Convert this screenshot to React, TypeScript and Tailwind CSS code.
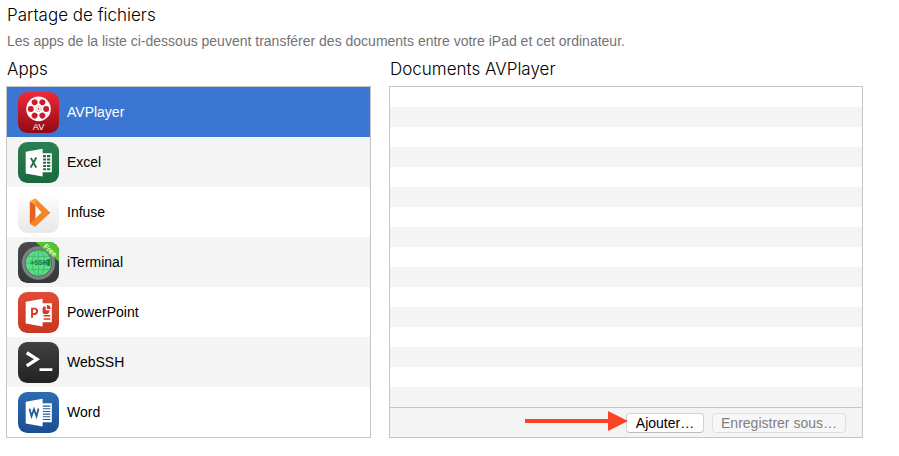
import React, { useState } from 'react';
import clsx from 'clsx';

interface AppItem {
    name: string;
    icon: React.ReactNode;
}

interface TileProps {
    id: string;
    from: string;
    to: string;
    children: React.ReactNode;
}

function Tile({ id, from, to, children }: TileProps) {
    return (
        <svg viewBox="0 0 40 40" className="size-[41px] shrink-0" aria-hidden="true">
            <defs>
                <linearGradient id={id} x1="0" y1="0" x2="0" y2="1">
                    <stop offset="0" stopColor={from} />
                    <stop offset="1" stopColor={to} />
                </linearGradient>
                <clipPath id={`${id}-clip`}>
                    <rect width="40" height="40" rx="9" />
                </clipPath>
            </defs>
            <g clipPath={`url(#${id}-clip)`}>
                <rect width="40" height="40" fill={`url(#${id})`} />
                {children}
            </g>
        </svg>
    );
}

function AVPlayerIcon() {
    return (
        <Tile id="avplayer" from="#f0283a" to="#8f0a14">
            <circle cx="20" cy="16.5" r="12" fill="#fff" />
            {[0, 60, 120, 180, 240, 300].map((angle) => (
                <circle key={angle} cx="20" cy="9" r="2.9" fill="#cb1b2a" transform={`rotate(${angle + 30} 20 16.5)`} />
            ))}
            <circle cx="20" cy="16.5" r="2.6" fill="none" stroke="#cb1b2a" strokeWidth=".6" strokeDasharray="1.2 1" />
            <circle cx="20" cy="16.5" r=".8" fill="#cb1b2a" />
            <text x="20" y="37.5" textAnchor="middle" fontSize="9" fill="#fff" fontFamily="Liberation Sans, sans-serif">AV</text>
        </Tile>
    );
}

function ExcelIcon() {
    return (
        <Tile id="excel" from="#2b8053" to="#176a3c">
            <rect x="22" y="11" width="11" height="18.5" fill="#fff" />
            <path d="M24.5 12.8h2.8v2h-2.8zM28.3 12.8h3.2v2h-3.2zM24.5 16h2.8v2h-2.8zM28.3 16h3.2v2h-3.2zM24.5 19.2h2.8v2h-2.8zM28.3 19.2h3.2v2h-3.2zM24.5 22.4h2.8v2h-2.8zM28.3 22.4h3.2v2h-3.2zM24.5 25.6h2.8v2h-2.8zM28.3 25.6h3.2v2h-3.2z" fill="#1d7044" />
            <path d="M7.5 9.5 24 6.7v27L7.5 30.8z" fill="#fff" />
            <path d="m12.6 15.5 5.2 9.5M17.9 15.2l-5.6 9.8" stroke="#1d7044" strokeWidth="1.9" />
        </Tile>
    );
}

function InfuseIcon() {
    return (
        <Tile id="infuse" from="#ffffff" to="#e8e8e8">
            <path d="m11.5 9 5.5-3 14.5 14.5-4.8 1.8L17 13z" fill="#ffa12c" />
            <path d="M31.5 20.3 16.8 34l-5.3-2.7 5.5-5.8 5.3-5.2L17 13l1-5z" fill="#f88325" />
            <path d="M17 13v12.5l6-5.8z" fill="#fafafa" />
            <path d="M11.5 9v22.3L17 26V13z" fill="#e6621c" />
        </Tile>
    );
}

function ITerminalIcon() {
    return (
        <Tile id="iterminal" from="#474b4f" to="#34383b">
            <circle cx="20" cy="20.5" r="16.3" fill="#7f8284" />
            <circle cx="20" cy="20.5" r="13.2" fill="#4f6a5a" />
            <circle cx="20" cy="20.5" r="12.4" fill="#58e184" />
            <g fill="none" stroke="#43b670" strokeWidth=".9">
                <ellipse cx="20" cy="20.5" rx="6" ry="12.4" />
                <path d="M20 8v25M9.5 14h21M7.6 20.5h24.8M9.5 27h21" />
            </g>
            <text x="20" y="22.5" textAnchor="middle" fontSize="7" fontWeight="bold" fill="#237044" fontFamily="Liberation Mono, monospace">&gt;SSH</text>
            <path d="M28.5 16.5h3v7h-3z" fill="#29794b" />
            <path d="M17 0h23v19z" fill="#52c72c" />
            <text x="31.5" y="10.5" textAnchor="middle" fontSize="7" fontWeight="bold" fill="#e6fbdc" fontFamily="Liberation Sans, sans-serif" transform="rotate(42 31.5 8)">Free</text>
        </Tile>
    );
}

function PowerPointIcon() {
    return (
        <Tile id="powerpoint" from="#df4c37" to="#c9371f">
            <rect x="22" y="11" width="11" height="18.5" fill="#fff" />
            <path d="M27 14a3.8 3.8 0 1 0 3.8 3.8H27z" fill="#d33c27" />
            <path d="M28.2 12.8v3.8h3.7a3.7 3.7 0 0 0-3.7-3.8z" fill="#d33c27" />
            <path d="M25 23.2h6.5M25 26.3h6.5" stroke="#d33c27" strokeWidth="1.4" />
            <path d="M7.5 9.5 24 6.7v27L7.5 30.8z" fill="#fff" />
            <path d="M13.7 25.2v-9h2.4q2.5 0 2.5 2.6t-2.6 2.6h-2.3" fill="none" stroke="#d33c27" strokeWidth="1.9" />
        </Tile>
    );
}

function WebSSHIcon() {
    return (
        <Tile id="webssh" from="#414141" to="#222222">
            <path d="m8.5 10.5 10 6.3-10 6.4" fill="none" stroke="#fff" strokeWidth="3.2" />
            <path d="M21 27h12.5" stroke="#fff" strokeWidth="2.8" />
        </Tile>
    );
}

function WordIcon() {
    return (
        <Tile id="word" from="#2d6bb3" to="#1b4e92">
            <rect x="22" y="11" width="11" height="18.5" fill="#fff" />
            <path d="M24 13.8h7.5M24 16.4h7.5M24 19h7.5M24 21.6h7.5M24 24.2h7.5M24 26.8h7.5" stroke="#235a9f" strokeWidth="1.1" />
            <path d="M7.5 9.5 24 6.7v27L7.5 30.8z" fill="#fff" />
            <path d="m11.3 16.3 1.9 7.4 2.4-7 2.5 7 1.9-7.6" fill="none" stroke="#235a9f" strokeWidth="1.7" />
        </Tile>
    );
}

const apps: AppItem[] = [
    { name: 'AVPlayer', icon: <AVPlayerIcon /> },
    { name: 'Excel', icon: <ExcelIcon /> },
    { name: 'Infuse', icon: <InfuseIcon /> },
    { name: 'iTerminal', icon: <ITerminalIcon /> },
    { name: 'PowerPoint', icon: <PowerPointIcon /> },
    { name: 'WebSSH', icon: <WebSSHIcon /> },
    { name: 'Word', icon: <WordIcon /> },
];

const emptyRows = Array.from({ length: 16 }, (_, i) => i);

export default function App() {
    const [selected, setSelected] = useState('AVPlayer');

    return (
        <main className="bg-white pt-[3px] pr-9 pb-4 pl-1.5 font-['Liberation_Sans',Arial,sans-serif] text-black">
            <h1 className="px-px font-[Inter,sans-serif] text-[17px] leading-6 font-light">Partage de fichiers</h1>
            <p className="px-px pt-1 text-[14px] leading-5 text-[#737373]">
                Les apps de la liste ci-dessous peuvent transférer des documents entre votre iPad et cet ordinateur.
            </p>

            <div className="grid grid-cols-[365fr_474fr] gap-[18px] pt-1.5">
                {/* Apps */}
                <section className="flex flex-col">
                    <h2 className="px-px pb-[5px] font-[Inter,sans-serif] text-[17px] leading-6 font-light">Apps</h2>
                    <ul className="border border-[#c6c6c6]">
                        {apps.map((app) => (
                            <li key={app.name} className="odd:bg-white even:bg-[#f4f4f4]">
                                <button
                                    type="button"
                                    aria-pressed={selected === app.name}
                                    onClick={() => setSelected(app.name)}
                                    className={clsx(
                                        'flex h-[50px] w-full items-center gap-2 pl-[11px] text-left text-[14px]',
                                        selected === app.name && 'bg-[#3b76d3] text-white'
                                    )}
                                >
                                    {app.icon}
                                    <span>{app.name}</span>
                                </button>
                            </li>
                        ))}
                    </ul>
                </section>

                {/* Documents */}
                <section className="flex flex-col">
                    <h2 className="px-px pb-[5px] font-[Inter,sans-serif] text-[17px] leading-6 font-light">Documents {selected}</h2>
                    <div className="border border-[#c6c6c6]">
                        <ul>
                            {emptyRows.map((row) => (
                                <li key={row} className="h-5 odd:bg-white even:bg-[#f4f4f4]" />
                            ))}
                        </ul>
                        <div className="flex h-[30px] items-center justify-end gap-2 border-t border-[#c6c6c6] bg-[#f4f4f4] pr-4">
                            <div className="relative">
                                <button type="button" className="block h-5 w-[78px] rounded border border-[#d2d2d2] border-b-[#bdbdbd] bg-white text-[14px] leading-4">
                                    Ajouter…
                                </button>
                                <svg viewBox="0 0 103 20" className="absolute top-[-2px] right-[76px] h-5 w-[103px]" aria-hidden="true">
                                    <path d="M0 8h83V0l20 10-20 10v-8H0z" fill="#fb4226" />
                                </svg>
                            </div>
                            <button type="button" disabled className="h-5 w-[134px] rounded border border-[#dfdfdf] bg-[#f7f7f7] text-[14px] leading-4 text-[#808080]">
                                Enregistrer sous…
                            </button>
                        </div>
                    </div>
                </section>
            </div>
        </main>
    );
}
